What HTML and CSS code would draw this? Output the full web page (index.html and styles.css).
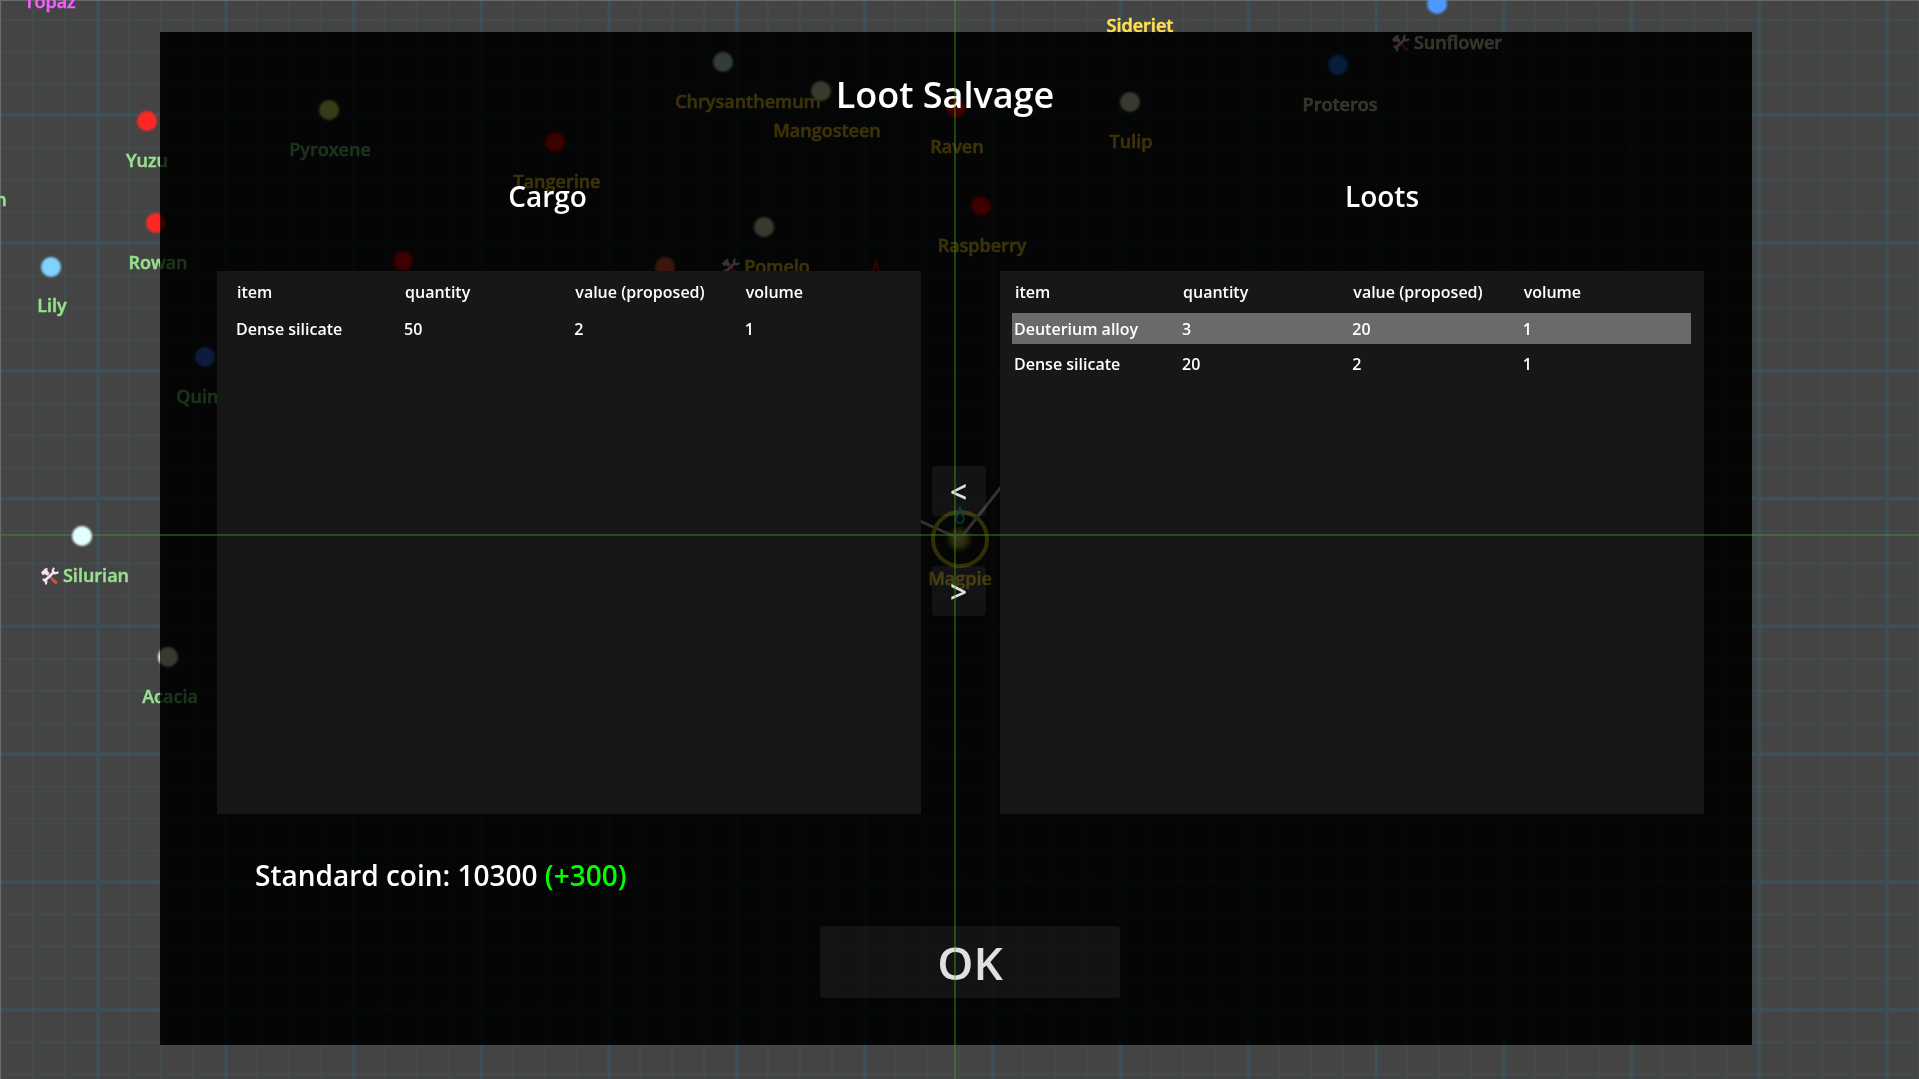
FILE: index.html
```html
<!DOCTYPE html>
<html lang="en">

<head>
    <meta charset="UTF-8" />
    <meta name="viewport" content="width=device-width, initial-scale=1.0" />
    <title>Loot Salvage</title>
    <link rel="stylesheet" href="styles.css">
</head>

<body>

    <!-- star map behind the dialog -->
    <svg class="map" viewBox="0 0 1919 1079" preserveAspectRatio="xMidYMid slice" aria-hidden="true">
        <defs>
            <pattern id="grid" x="96" y="-11" width="127.8" height="127.8" patternUnits="userSpaceOnUse">
                <path class="minor" d="M33 0V128M65 0V128M97 0V128M0 31H128M0 63H128M0 95H128" />
                <path class="major" d="M2 0V128M0 126H128" />
            </pattern>
            <filter id="soft" x="-30%" y="-30%" width="160%" height="160%">
                <feGaussianBlur stdDeviation="1" />
            </filter>
            <radialGradient id="glow">
                <stop offset="0" stop-color="#fff27a" />
                <stop offset="0.5" stop-color="#e8dc60" stop-opacity="0.8" />
                <stop offset="1" stop-color="#d8cc50" stop-opacity="0" />
            </radialGradient>
            <symbol id="tools" viewBox="0 0 18 18">
                <path d="M7 6l10 9.500-2.500 2.300L5.500 8z" fill="#c4553a" />
                <path d="M0 5.500L4.500 1l2.500 .5-.8 1.500 2.300 3.500L6 8.800 3.800 7 2 8.500z" fill="#f1e4f8" />
                <path d="M3 14.500L13.500 4.500" stroke="#f1e4f8" stroke-width="2.600" />
                <path d="M13 .8l-1.500 3 2.500 2.700 3.500-1.300M1.500 12.500l2.500 .3 1.500 2-.8 2.700" fill="none" stroke="#f1e4f8" stroke-width="2" />
            </symbol>
        </defs>

        <rect width="1919" height="1079" fill="url(#grid)" />
        <path class="axis" d="M955 0V1079M0 535H1919" />
        <path class="edge" d="M0 .5H1919M.5 0V1079" />

        <g filter="url(#soft)">
            <circle cx="147" cy="121" r="10" fill="#ff2828" />
            <circle cx="156" cy="223" r="10" fill="#ff2828" />
            <circle cx="51" cy="267" r="10" fill="#80d2ff" />
            <circle cx="329" cy="110" r="10" fill="#f5ff86" />
            <circle cx="205" cy="357" r="10" fill="#5a96ff" />
            <circle cx="82" cy="536" r="10" fill="#e4ffff" />
            <circle cx="168" cy="657" r="10" fill="#f5fcd9" />
            <circle cx="723" cy="62" r="10" fill="#e2ffff" />
            <circle cx="821" cy="91" r="10" fill="#f5fcd9" />
            <circle cx="956" cy="108" r="10" fill="#ff2828" />
            <circle cx="1130" cy="102" r="10" fill="#f5fcd9" />
            <circle cx="981" cy="206" r="10" fill="#ff2828" />
            <circle cx="764" cy="227" r="10" fill="#f5fcd9" />
            <circle cx="665" cy="267" r="10" fill="#ff8060" />
            <circle cx="555" cy="142" r="10" fill="#ff2828" />
            <circle cx="403" cy="261" r="10" fill="#ff2828" />
            <circle cx="1338" cy="65" r="10" fill="#5096ff" />
            <circle cx="1437" cy="4" r="10" fill="#5098ff" />
        </g>

        <circle cx="959" cy="539" r="14" fill="url(#glow)" />
        <path class="route" d="M840 485L960 539L1020 463" />
        <circle class="orbit" cx="960" cy="539" r="27" />
        <path class="ship" d="M960 508L956 519L958 523H962L964 519Z" />
        <path class="enemy" d="M872 274L876 262L880 274" />

        <g class="labels green">
            <text x="147" y="167">Yuzu</text>
            <text x="158" y="269">Rowan</text>
            <text x="52" y="312">Lily</text>
            <text x="330" y="156">Pyroxene</text>
            <text x="207" y="403">Quince</text>
            <text x="96" y="582">Silurian</text>
            <text x="170" y="703">Acacia</text>
            <text x="1" y="206">n</text>
        </g>
        <g class="labels yellow">
            <text x="748" y="108">Chrysanthemum</text>
            <text x="827" y="137">Mangosteen</text>
            <text x="957" y="153">Raven</text>
            <text x="1131" y="148">Tulip</text>
            <text x="982" y="252">Raspberry</text>
            <text x="777" y="273">Pomelo</text>
            <text x="557" y="188">Tangerine</text>
            <text x="1140" y="32">Sideriet</text>
            <text x="960" y="585">Magpie</text>
        </g>
        <g class="labels pale">
            <text x="1340" y="111">Proteros</text>
            <text x="1458" y="49">Sunflower</text>
        </g>
        <g class="labels pink">
            <text x="50" y="8">Topaz</text>
        </g>

        <use href="#tools" x="41" y="567" width="18" height="18" />
        <use href="#tools" x="722" y="258" width="18" height="18" />
        <use href="#tools" x="1392" y="34" width="18" height="18" />
    </svg>

    <main class="dialog">
        <h1>Loot Salvage</h1>

        <div class="headings">
            <h2 class="cargo-title" id="cargoTitle">Cargo</h2>
            <h2 class="loots-title" id="lootsTitle">Loots</h2>
        </div>

        <div class="trade">
            <section class="panel cargo">
                <table aria-labelledby="cargoTitle">
                    <thead>
                        <tr>
                            <th>item</th>
                            <th>quantity</th>
                            <th>value (proposed)</th>
                            <th>volume</th>
                        </tr>
                    </thead>
                    <tbody>
                        <tr>
                            <td>Dense silicate</td>
                            <td>50</td>
                            <td>2</td>
                            <td>1</td>
                        </tr>
                    </tbody>
                </table>
            </section>

            <div class="transfer">
                <button type="button" aria-label="Move to cargo">&lt;</button>
                <button type="button" aria-label="Move to loots">&gt;</button>
            </div>

            <section class="panel loots">
                <table aria-labelledby="lootsTitle">
                    <thead>
                        <tr>
                            <th>item</th>
                            <th>quantity</th>
                            <th>value (proposed)</th>
                            <th>volume</th>
                        </tr>
                    </thead>
                    <tbody>
                        <tr class="selected">
                            <td>Deuterium alloy</td>
                            <td>3</td>
                            <td>20</td>
                            <td>1</td>
                        </tr>
                        <tr>
                            <td>Dense silicate</td>
                            <td>20</td>
                            <td>2</td>
                            <td>1</td>
                        </tr>
                    </tbody>
                </table>
            </section>
        </div>

        <p class="coins">Standard coin: 10300 <span class="gain">(+300)</span></p>

        <button type="button" class="ok">OK</button>
    </main>

    <!-- the axes stay visible across the dialog -->
    <svg class="axes" viewBox="0 0 1919 1079" preserveAspectRatio="xMidYMid slice" aria-hidden="true">
        <path d="M955 32V1045M160 535H1753" />
    </svg>

</body>

</html>
```
FILE: styles.css
```css
* {
    box-sizing: border-box;
    margin: 0;
    padding: 0;
}

body {
    position: relative;
    display: flex;
    min-height: 100vh;
    padding: 32px 166px 34px 160px;
    overflow: hidden;
    background: #444;
    color: #fff;
    font-family: "Open Sans", "Noto Sans", sans-serif;
    font-weight: 600;
}

h1,
h2,
th,
button {
    font-family: inherit;
    font-weight: 600;
}

/* map */
.map,
.axes {
    position: absolute;
    top: 0;
    left: 0;
    width: 100%;
    height: 100%;
}

.axes {
    pointer-events: none;
}

.axes path {
    stroke: rgba(70, 160, 30, 0.38);
    stroke-width: 2;
}

.axis {
    stroke: rgba(80, 150, 50, 0.4);
    stroke-width: 2;
}

.minor {
    fill: none;
    stroke: rgba(50, 110, 120, 0.17);
    stroke-width: 2;
}

.major {
    fill: none;
    stroke: rgba(45, 105, 135, 0.35);
    stroke-width: 3;
}

.edge {
    stroke: #6a6a6a;
}

.route {
    fill: none;
    stroke: #ddd;
    stroke-width: 3;
}

.orbit {
    fill: none;
    stroke: #e0d440;
    stroke-width: 4;
}

.ship {
    fill: none;
    stroke: #20e0e0;
    stroke-width: 2;
}

.enemy {
    fill: none;
    stroke: #ff2020;
    stroke-width: 2;
}

/* thin outline in the label's own colour */
.labels {
    stroke-width: 0.5;
}

.labels text {
    font-size: 18px;
    text-anchor: middle;
}

.green {
    fill: #98e090;
    stroke: #98e090;
}

.yellow {
    fill: #ffe04d;
    stroke: #ffe04d;
}

.pale {
    fill: #e7efcb;
    stroke: #e7efcb;
}

.pink {
    fill: #f060ff;
    stroke: #f060ff;
}

/* dialog */
.dialog {
    position: relative;
    flex: 1;
    display: flex;
    flex-direction: column;
    padding: 38px 49px 47px 57px;
    backdrop-filter: brightness(0.26) contrast(1.118);
}

h1 {
    padding-right: 31px;
    margin-bottom: 56px;
    font-size: 36px;
    line-height: 50px;
    text-align: center;
}

.headings,
.trade {
    display: grid;
    grid-template-columns: 1fr 79px 1fr;
}

.headings {
    margin-bottom: 55px;
}

h2 {
    font-size: 28px;
    line-height: 40px;
    text-align: center;
}

.cargo-title {
    padding-right: 43px;
}

.loots-title {
    grid-column: 3;
    padding-left: 60px;
}

.trade {
    flex: 1;
}

.panel {
    background: #171717;
}

.cargo {
    padding: 0 8px 0 17px;
}

.loots {
    padding: 0 13px 0 12px;
}

table {
    width: 100%;
    table-layout: fixed;
    border-spacing: 0 4px;
    font-size: 16px;
    line-height: 22px;
    text-align: left;
}

th {
    height: 34px;
    padding-left: 3px;
}

td {
    height: 31px;
    padding-left: 2px;
}

th:first-child {
    width: 168px;
}

.selected {
    background: #6a6a6a;
}

.transfer {
    display: flex;
    flex-direction: column;
    justify-content: center;
    align-items: center;
    gap: 50px;
    padding: 0 4px 4px 0;
}

button {
    border: 0;
    border-radius: 4px;
    background: rgba(255, 255, 255, 0.06);
    color: #e0e0e0;
    cursor: pointer;
}

.transfer button {
    width: 54px;
    height: 50px;
    padding-top: 2px;
    font-size: 30px;
    line-height: 40px;
}

.coins {
    margin: 41px 0 31px 38px;
    font-size: 28px;
    line-height: 40px;
}

.gain {
    color: #0f0;
}

.ok {
    align-self: center;
    width: 300px;
    height: 72px;
    margin-left: 19px;
    font-size: 46px;
    line-height: 72px;
}
```
